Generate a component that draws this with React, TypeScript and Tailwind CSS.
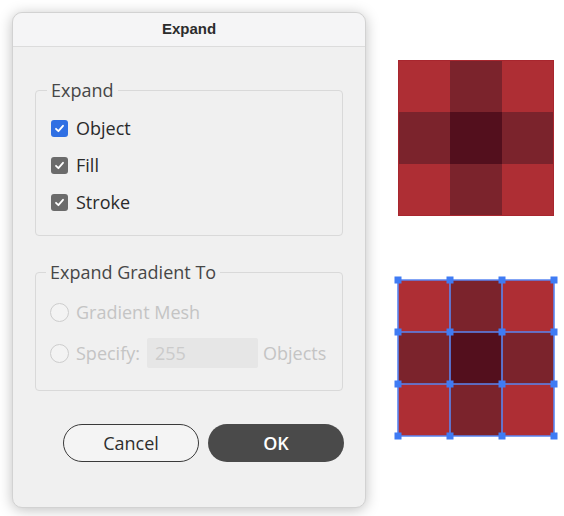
import React from "react";

const font = { fontFamily: '"Open Sans", "Noto Sans", sans-serif' };

function Check({ color }: { color: string }) {
  return (
    <span className={`flex h-[17px] w-[17px] items-center justify-center rounded-[3px] ${color}`}>
      <svg width="11" height="11" viewBox="0 0 11 11">
        <path d="M2 5.8 L4.4 8.2 L9 2.8" fill="none" stroke="white" strokeWidth="1.8" strokeLinecap="round" strokeLinejoin="round" />
      </svg>
    </span>
  );
}

function Radio() {
  return <span className="block h-[19px] w-[19px] shrink-0 rounded-full border-[1.5px] border-[#cdcdcd] bg-[#f3f3f3]" />;
}

function Grid({ selected }: { selected?: boolean }) {
  const cell = 52;
  const colors = [
    ["#ae2e34", "#7b232c", "#ae2e34"],
    ["#7b232c", "#530f1d", "#7b232c"],
    ["#ae2e34", "#7b232c", "#ae2e34"],
  ];
  const pts = [0, 52, 104, 156];
  return (
    <svg width="164" height="164" viewBox="-4 -4 164 164" className="block">
      {colors.map((row, r) =>
        row.map((c, i) => <rect key={`${r}-${i}`} x={i * cell} y={r * cell} width={cell} height={cell} fill={c} />)
      )}
      {!selected && <rect x="0.5" y="0.5" width="155" height="155" fill="none" stroke="#a8262e" strokeWidth="1" />}
      {selected && (
        <>
          {pts.map((p) => (
            <g key={p}>
              <line x1={p} y1={0} x2={p} y2={156} stroke="#5a86f2" strokeWidth="1.6" />
              <line x1={0} y1={p} x2={156} y2={p} stroke="#5a86f2" strokeWidth="1.6" />
            </g>
          ))}
          {pts.map((x) =>
            pts.map((y) => <rect key={`${x}-${y}`} x={x - 3.5} y={y - 3.5} width="7" height="7" fill="#3f7bf4" />)
          )}
        </>
      )}
    </svg>
  );
}

export default function App() {
  return (
    <div className="flex h-[516px] w-[564px] bg-white" style={font}>
      <div className="ml-[12px] mt-[12px] flex h-[496px] w-[354px] flex-col rounded-[10px] border border-[#d2d2d2] bg-[#f0f0f0] shadow-[0_2px_14px_rgba(0,0,0,0.25)]">
        <div className="flex h-[34px] items-center justify-center rounded-t-[10px] border-b border-[#dcdcdc] bg-[#f5f5f6] text-[15px] font-bold text-[#2c2c2c]" style={{ fontFamily: '"Liberation Sans", Arial, sans-serif' }}>
          Expand
        </div>

        <fieldset className="mx-[22px] mt-[31px] rounded-[4px] border border-[#d9d9d9] px-[15px] pb-[14px] pt-[8px]">
          <legend className="-ml-[4px] px-[4px] text-[18px] leading-[24px] text-[#474747]">Expand</legend>
          <div className="flex h-[37px] items-center gap-[8px] text-[18px] text-[#2a2a2a]">
            <Check color="bg-[#2f6fe3]" />
            <span>Object</span>
          </div>
          <div className="flex h-[37px] items-center gap-[8px] text-[18px] text-[#2a2a2a]">
            <Check color="bg-[#6b6b6b]" />
            <span>Fill</span>
          </div>
          <div className="flex h-[37px] items-center gap-[8px] text-[18px] text-[#2a2a2a]">
            <Check color="bg-[#6b6b6b]" />
            <span>Stroke</span>
          </div>
        </fieldset>

        <fieldset className="mx-[22px] mt-[24px] rounded-[4px] border border-[#d9d9d9] px-[14px] pb-[16px] pt-[8px]">
          <legend className="-ml-[4px] px-[4px] text-[18px] leading-[24px] text-[#474747]">Expand Gradient To</legend>
          <div className="flex h-[40px] items-center gap-[7px] text-[18px] text-[#c4c4c4]">
            <Radio />
            <span>Gradient Mesh</span>
          </div>
          <div className="flex h-[42px] items-center gap-[7px] text-[18px] text-[#c4c4c4]">
            <Radio />
            <span>Specify:</span>
            <span className="flex h-[30px] w-[111px] shrink-0 items-center rounded-[2px] bg-[#e6e6e6] px-[8px] text-[#cbcbcb]">255</span>
            <span className="-ml-[2px]">Objects</span>
          </div>
        </fieldset>

        <div className="mr-[21px] mt-[33px] flex justify-end gap-[9px]">
          <button className="flex h-[38px] w-[136px] items-center justify-center rounded-full border-[1.5px] border-[#3a3a3a] bg-[#f4f4f4] text-[18px] text-[#2e2e2e]">
            Cancel
          </button>
          <button className="flex h-[38px] w-[136px] items-center justify-center rounded-full bg-[#4a4a4a] text-[18px] font-semibold text-white">
            OK
          </button>
        </div>
      </div>

      <div className="ml-[28px] flex flex-col">
        <div className="mt-[56px]">
          <Grid />
        </div>
        <div className="mt-[56px]">
          <Grid selected />
        </div>
      </div>
    </div>
  );
}
